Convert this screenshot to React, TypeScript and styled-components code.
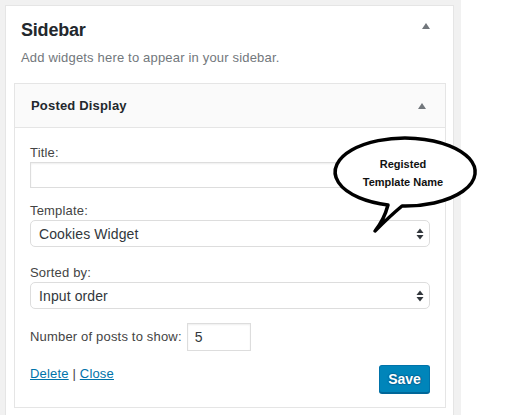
import React from "react";
import styled, { createGlobalStyle } from "styled-components";

const Global = createGlobalStyle`
  html, body { margin: 0; padding: 0; background: #fff; }
  body { font-family: "Liberation Sans", Arial, sans-serif; font-size: 13px; color: #444; letter-spacing: 0.18px; }
  * { box-sizing: border-box; }
`;

const Page = styled.div`
  position: relative;
  width: 532px;
  height: 415px;
  overflow: hidden;
`;

const Frame = styled.div`
  width: 461px;
  height: 415px;
  background: #f1f1f1;
  padding: 5px 7px 0 5px;
  overflow: hidden;
`;

const Panel = styled.div`
  background: #fff;
  border: 1px solid #e5e5e5;
  height: 440px;
  padding-top: 12px;
`;

const PanelHeader = styled.div`
  display: flex;
  align-items: center;
  justify-content: space-between;
  padding: 0 23px 0 15px;
  height: 24px;
`;

const PanelTitle = styled.h2`
  margin: 0;
  font-size: 18px;
  font-weight: 700;
  color: #23282d;
  line-height: 24px;
  letter-spacing: -0.2px;
`;

const Caret = styled.span<{ $dy?: number }>`
  display: block;
  width: 0;
  height: 0;
  border-left: 4px solid transparent;
  border-right: 4px solid transparent;
  border-bottom: 6px solid #72777c;
  transform: translateY(${(p) => p.$dy ?? 0}px);
`;

const Description = styled.p`
  margin: 6px 0 0;
  padding: 0 15px;
  line-height: 20px;
  color: #72777c;
`;

const WidgetBox = styled.div`
  margin: 15px 7px 0 8px;
  border: 1px solid #e5e5e5;
`;

const WidgetHeader = styled.div`
  display: flex;
  align-items: center;
  justify-content: space-between;
  height: 44px;
  padding: 0 19px 0 16px;
  background: #fafafa;
  border-bottom: 1px solid #e5e5e5;
`;

const WidgetTitle = styled.h3`
  margin: 0;
  font-size: 13px;
  font-weight: 700;
  color: #23282d;
`;

const WidgetBody = styled.div`
  padding: 16px 15px 14px;
  display: flex;
  flex-direction: column;
`;

const Field = styled.div<{ $gap?: number }>`
  margin-top: ${(p) => p.$gap ?? 0}px;
  display: flex;
  flex-direction: column;
`;

const Label = styled.label`
  display: block;
  line-height: 18px;
  color: #444;
`;

const TextInput = styled.input`
  display: block;
  width: 100%;
  height: 26px;
  margin: 0;
  padding: 3px 8px;
  border: 1px solid #ddd;
  box-shadow: inset 0 1px 2px rgba(0, 0, 0, 0.07);
  background: #fff;
  font-family: inherit;
  font-size: 14px;
  color: #32373c;
  outline: none;
`;

const SelectWrap = styled.div`
  position: relative;
`;

const Select = styled.select`
  display: block;
  width: 100%;
  height: 27px;
  margin: 0;
  padding: 0 8px;
  border: 1px solid #ddd;
  border-radius: 5px;
  background: #fff;
  appearance: none;
  -webkit-appearance: none;
  font-family: inherit;
  font-size: 14px;
  letter-spacing: 0.1px;
  color: #32373c;
  outline: none;
`;

const SelectArrows = styled.svg`
  position: absolute;
  right: 5px;
  top: 50%;
  margin-top: -6px;
  pointer-events: none;
`;

const InlineRow = styled.div`
  display: flex;
  align-items: center;
  gap: 5px;
  margin-top: 14px;
`;

const SmallInput = styled(TextInput)`
  width: 64px;
  height: 28px;
  padding: 3px 7px;
`;

const Actions = styled.div`
  display: flex;
  justify-content: space-between;
  align-items: flex-start;
  margin-top: 14px;
`;

const Links = styled.div`
  line-height: 18px;
  color: #444;
`;

const Link = styled.a`
  color: #0073aa;
  text-decoration: underline;
`;

const SaveButton = styled.button`
  width: 51px;
  height: 28px;
  padding: 0;
  border: 1px solid #0073aa;
  border-bottom-color: #006799;
  border-radius: 3px;
  background: #0085ba;
  box-shadow: 0 1px 0 #006799;
  color: #fff;
  font-family: inherit;
  font-size: 14px;
  font-weight: 700;
  text-shadow: 0 -1px 1px #006799, 1px 0 1px #006799, 0 1px 1px #006799, -1px 0 1px #006799;
`;

const Bubble = styled.div`
  position: absolute;
  left: 320px;
  top: 130px;
  width: 170px;
  height: 110px;
`;

const BubbleText = styled.div`
  position: absolute;
  left: 0;
  top: 25px;
  width: 166px;
  text-align: center;
  font-size: 11px;
  font-weight: 700;
  line-height: 18px;
  letter-spacing: 0;
  color: #111;
`;

const Arrows = () => (
  <SelectArrows width="10" height="12" viewBox="0 0 10 12">
    <path d="M5 0.5 L8.5 5 L1.5 5 Z" fill="#32373c" />
    <path d="M5 11.5 L8.5 7 L1.5 7 Z" fill="#32373c" />
  </SelectArrows>
);

export default function App() {
  return (
    <Page>
      <Global />
      <Frame>
        <Panel>
          <PanelHeader>
            <PanelTitle>Sidebar</PanelTitle>
            <Caret $dy={-4} />
          </PanelHeader>
          <Description>Add widgets here to appear in your sidebar.</Description>
          <WidgetBox>
            <WidgetHeader>
              <WidgetTitle>Posted Display</WidgetTitle>
              <Caret />
            </WidgetHeader>
            <WidgetBody>
              <Field>
                <Label>Title:</Label>
                <TextInput type="text" defaultValue="" />
              </Field>
              <Field $gap={14}>
                <Label>Template:</Label>
                <SelectWrap>
                  <Select defaultValue="cookies">
                    <option value="cookies">Cookies Widget</option>
                  </Select>
                  <Arrows />
                </SelectWrap>
              </Field>
              <Field $gap={17}>
                <Label>Sorted by:</Label>
                <SelectWrap>
                  <Select defaultValue="input">
                    <option value="input">Input order</option>
                  </Select>
                  <Arrows />
                </SelectWrap>
              </Field>
              <InlineRow>
                <Label>Number of posts to show:</Label>
                <SmallInput type="text" defaultValue="5" />
              </InlineRow>
              <Actions>
                <Links>
                  <Link href="#">Delete</Link> | <Link href="#">Close</Link>
                </Links>
                <SaveButton>Save</SaveButton>
              </Actions>
            </WidgetBody>
          </WidgetBox>
        </Panel>
      </Frame>
      <Bubble>
        <svg width="170" height="110" viewBox="320 130 170 110">
          <path
            d="M 402 206 A 70 34 0 1 0 388 205 Q 384 220 375 231 Q 390 216 402 206 Z"
            fill="#fff"
            stroke="#000"
            strokeWidth="3.5"
            strokeLinejoin="round"
          />
        </svg>
        <BubbleText>
          Registed
          <br />
          Template Name
        </BubbleText>
      </Bubble>
    </Page>
  );
}
